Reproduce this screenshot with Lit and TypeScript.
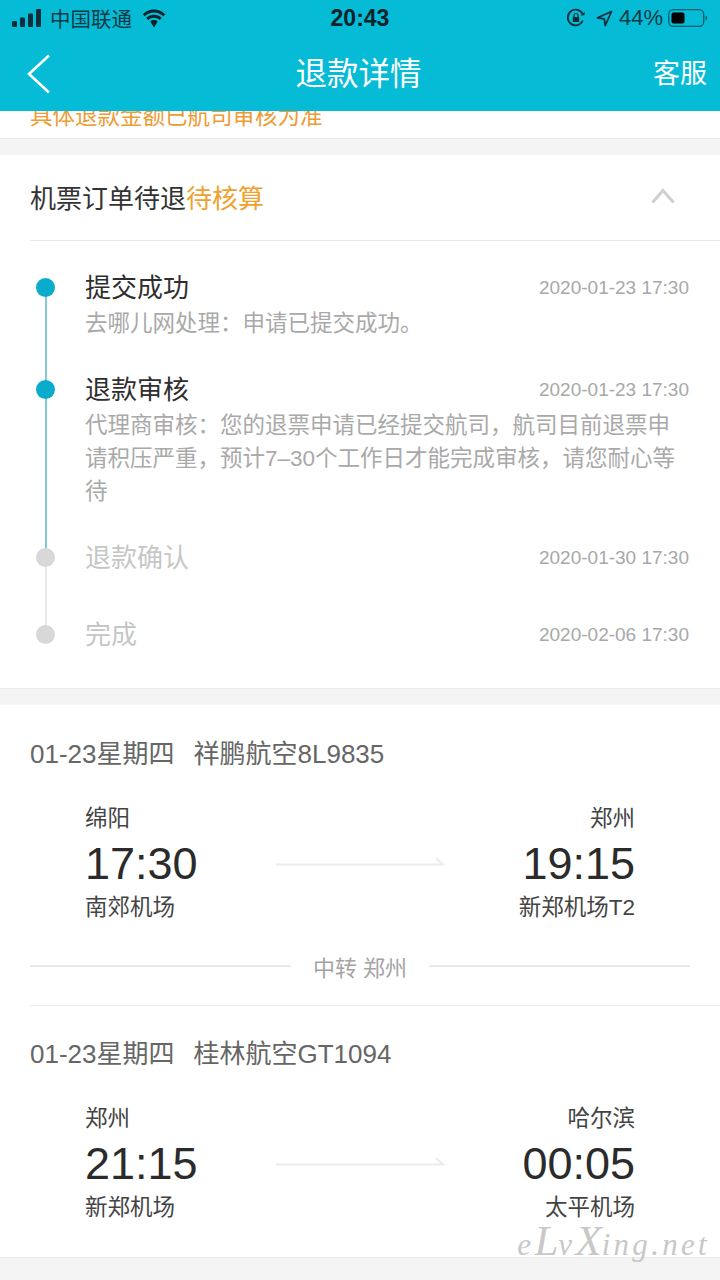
import { LitElement, html, css, svg } from "lit";
import { customElement } from "lit/decorators.js";

const STEPS = [
  { title: "提交成功", time: "2020-01-23 17:30", desc: ["去哪儿网处理\uFF1A申请已提交成功。"], on: true, next: true },
  {
    title: "退款审核",
    time: "2020-01-23 17:30",
    desc: [
      "代理商审核\uFF1A您的退票申请已经提交航司\uFF0C航司目前退票申",
      "请积压严重\uFF0C预计7–30个工作日才能完成审核\uFF0C请您耐心等",
      "待",
    ],
    on: true,
    next: true,
  },
  { title: "退款确认", time: "2020-01-30 17:30", desc: [], on: false, next: false },
  { title: "完成", time: "2020-02-06 17:30", desc: [], on: false, next: false },
];

const arrow = svg`<svg class="arrow" width="170" height="10" viewBox="0 0 170 10">
  <path d="M1 8.500H168L161 2" fill="none" stroke="#ececec" stroke-width="2"/>
</svg>`;

@customElement("app-root")
export class AppRoot extends LitElement {
  static styles = css`
    :host {
      display: block;
      position: relative;
      width: 720px;
      height: 1280px;
      overflow: hidden;
      background: #f4f4f4;
      font-family: "Liberation Sans", "Noto Sans CJK SC", sans-serif;
      color: #333;
    }
    .top {
      background: #05bbd5;
      height: 111px;
    }
    .status {
      height: 36px;
      display: grid;
      grid-template-columns: 1fr auto 1fr;
      align-items: center;
      color: #0b3a47;
      font-size: 20.5px;
      padding: 0 12px;
    }
    .status .left,
    .status .right {
      display: flex;
      align-items: center;
    }
    .status .right {
      justify-content: flex-end;
    }
    .carrier {
      margin: 0 9px;
    }
    .clock {
      font-weight: 700;
      font-size: 23px;
      color: #08222a;
    }
    .pct {
      margin: 0 5px 0 6px;
      font-size: 22px;
    }
    .nav {
      height: 75px;
      display: grid;
      grid-template-columns: 1fr auto 1fr;
      align-items: center;
      color: #fff;
      padding: 0 13px;
    }
    .nav svg {
      margin-left: 13px;
    }
    .nav .title {
      font-size: 31.5px;
      margin: -5px 0 0 -3px;
    }
    .nav .service {
      justify-self: end;
      font-size: 27px;
      margin-top: -4px;
    }
    .notice {
      height: 21px;
      background: #fff;
      border-bottom: 1px solid #ececec;
      overflow: hidden;
      display: flex;
      align-items: flex-end;
      padding: 0 30px 6px;
      color: #ee9a33;
      font-size: 22.5px;
      line-height: 30px;
    }
    .card {
      background: #fff;
      margin-top: 16px;
      border-bottom: 1px solid #ececec;
    }
    .head {
      height: 86px;
      margin-left: 30px;
      border-bottom: 1px solid #e8e8e8;
      display: flex;
      align-items: center;
      justify-content: space-between;
      font-size: 26px;
      color: #333;
      box-sizing: border-box;
      padding-bottom: 3px;
    }
    .head em {
      font-style: normal;
      color: #eea22e;
    }
    .head svg {
      margin-right: 45px;
    }
    .steps {
      padding: 28px 31px 36px 85px;
    }
    .step {
      position: relative;
      padding-bottom: 31px;
    }
    .step:nth-child(3) {
      padding-bottom: 41px;
    }
    .step:last-child {
      padding-bottom: 0;
    }
    .dot {
      position: absolute;
      left: -49px;
      top: 9px;
      width: 19px;
      height: 19px;
      border-radius: 50%;
      background: #d8d8d8;
      z-index: 1;
    }
    .on .dot {
      background: #0aaccb;
    }
    .line {
      position: absolute;
      left: -40px;
      top: 18px;
      bottom: -18px;
      width: 2px;
      background: #e8e8e8;
    }
    .next .line {
      background: #80cbda;
    }
    .step:last-child .line {
      display: none;
    }
    .row {
      display: flex;
      justify-content: space-between;
      align-items: center;
      height: 36px;
      font-size: 26px;
      color: #c6c6c6;
    }
    .row span {
      margin-top: -4px;
    }
    .on .row {
      color: #2e2e2e;
    }
    .row time {
      font-size: 19px;
      color: #a8a8a8;
      margin-top: 2px;
    }
    .desc {
      font-size: 22.5px;
      line-height: 33px;
      color: #a9a9a9;
      margin-top: 2px;
      white-space: nowrap;
    }
    .flights {
      background: #fff;
      margin-top: 16px;
      height: 552px;
      border-bottom: 1px solid #ececec;
    }
    .date {
      margin-left: 30px;
      height: 34px;
      padding-top: 29px;
      display: flex;
      align-items: center;
      gap: 19px;
      font-size: 26px;
      color: #666;
    }
    .leg {
      display: grid;
      grid-template-columns: 1fr 170px 1fr;
      align-items: center;
      padding: 35px 85px 0;
    }
    .end {
      display: flex;
      flex-direction: column;
      font-size: 22.5px;
      color: #444;
      line-height: 32px;
    }
    .end.right {
      align-items: flex-end;
    }
    .end b {
      font-weight: 400;
      font-size: 45px;
      line-height: 57px;
      color: #2b2b2b;
    }
    .arrow {
      display: block;
      margin-top: -6px;
    }
    .transfer {
      display: flex;
      align-items: center;
      gap: 22px;
      margin: 27px 30px 0;
      height: 30px;
      color: #a4a4a4;
      font-size: 22px;
    }
    .transfer::before,
    .transfer::after {
      content: "";
      flex: 1;
      height: 1.5px;
      background: #e8e8e8;
    }
    .rule {
      margin: 24px 0 0 30px;
      height: 1px;
      background: #eeeeee;
    }
    .rule + .date {
      padding-top: 28px;
    }
    .mark {
      position: absolute;
      right: 10px;
      top: 1220px;
      font-family: "Liberation Serif", serif;
      font-style: italic;
      font-size: 31px;
      line-height: 42px;
      letter-spacing: 3.3px;
      color: #c8c8c8;
      white-space: nowrap;
    }
    .mark span {
      font-size: 43px;
      letter-spacing: 0;
    }
  `;

  private statusBar() {
    return html`<div class="status">
      <div class="left">
        <svg width="29" height="18" viewBox="0 0 29 18" fill="#0b2f3a">
          <rect x="0" y="12" width="5" height="6" rx="1"/>
          <rect x="8" y="8.500" width="5" height="9.500" rx="1"/>
          <rect x="16" y="4.500" width="5" height="13.500" rx="1"/>
          <rect x="24" y="0" width="5" height="18" rx="1"/>
        </svg>
        <span class="carrier">中国联通</span>
        <svg width="26" height="19" viewBox="0 0 26 19" fill="#08222a">
          <path d="M13 3.600c3.600 0 6.900 1.400 9.400 3.700l1.900-2.100C21.300 2.400 17.300.6 13 .6S4.700 2.400 1.700 5.200l1.900 2.100C6.100 5 9.400 3.600 13 3.600z"/>
          <path d="M13 8.800c2.200 0 4.200.8 5.800 2.200l2-2.200C18.600 6.900 15.900 5.800 13 5.800s-5.600 1.100-7.800 3l2 2.200c1.600-1.400 3.600-2.200 5.800-2.200z"/>
          <path d="M13 11c-1.500 0-2.700.5-3.700 1.400L13 18.600l3.700-6.200c-1-.9-2.200-1.400-3.700-1.400z"/>
        </svg>
      </div>
      <div class="clock">20:43</div>
      <div class="right">
        <svg width="20" height="20" viewBox="0 0 20 20" fill="none" stroke="#0b2f3a" stroke-width="1.800">
          <path d="M16.800 12.500A7.800 7.800 0 1 1 16.800 6.500"/>
          <path d="M14.500 7.500l4-.2.400-3.600z" fill="#0b2f3a" stroke="none"/>
          <rect x="6.800" y="9" width="6.400" height="5" fill="#0b2f3a" stroke="none"/>
          <path d="M8 9V7.500a2 2 0 0 1 4 0V9" stroke-width="1.200"/>
        </svg>
        <svg style="margin-left:10px" width="17" height="17" viewBox="0 0 17 17" fill="none" stroke="#0b2f3a" stroke-width="1.800" stroke-linejoin="round">
          <path d="M15.500 1.500L1.500 7.800l6.800 1 1 6.700z"/>
        </svg>
        <span class="pct">44%</span>
        <svg width="40" height="18" viewBox="0 0 40 18">
          <rect x=".7" y=".7" width="35" height="16.600" rx="4.500" fill="none" stroke="#0b5c6e" stroke-width="1.300"/>
          <rect x="3.500" y="3.500" width="13" height="11" rx="2" fill="#000"/>
          <path d="M37.500 6.500c1.300.4 1.800 1.300 1.800 2.500s-.5 2.100-1.800 2.500z" fill="#0b5c6e"/>
        </svg>
      </div>
    </div>`;
  }

  private flight(date: string, flightNo: string, from: string[], to: string[]) {
    return html`<div class="date"><span>${date}</span><span>${flightNo}</span></div>
      <div class="leg">
        <div class="end"><span>${from[0]}</span><b>${from[1]}</b><span>${from[2]}</span></div>
        ${arrow}
        <div class="end right"><span>${to[0]}</span><b>${to[1]}</b><span>${to[2]}</span></div>
      </div>`;
  }

  render() {
    return html`
      <div class="top">
        ${this.statusBar()}
        <div class="nav">
          <svg width="26" height="40" viewBox="0 0 26 40" fill="none" stroke="#fff" stroke-width="2.600">
            <path d="M23 1.500L3 20l20 18.500"/>
          </svg>
          <div class="title">退款详情</div>
          <div class="service">客服</div>
        </div>
      </div>
      <div class="notice"><span>具体退款金额已航司审核为准</span></div>

      <section class="card">
        <div class="head">
          <span>机票订单待退<em>待核算</em></span>
          <svg width="24" height="16" viewBox="0 0 24 16" fill="none" stroke="#cfcfcf" stroke-width="3">
            <path d="M1.500 14.500L12 2.500l10.500 12"/>
          </svg>
        </div>
        <div class="steps">
          ${STEPS.map(
            (s) => html`<div class="step ${s.on ? "on" : ""} ${s.next ? "next" : ""}">
              <i class="dot"></i><i class="line"></i>
              <div class="row"><span>${s.title}</span><time>${s.time}</time></div>
              ${s.desc.length ? html`<div class="desc">${s.desc.map((d) => html`<div>${d}</div>`)}</div>` : ""}
            </div>`
          )}
        </div>
      </section>

      <section class="flights">
        ${this.flight("01-23星期四", "祥鹏航空8L9835", ["绵阳", "17:30", "南郊机场"], ["郑州", "19:15", "新郑机场T2"])}
        <div class="transfer">中转 郑州</div>
        <div class="rule"></div>
        ${this.flight("01-23星期四", "桂林航空GT1094", ["郑州", "21:15", "新郑机场"], ["哈尔滨", "00:05", "太平机场"])}
      </section>
      <div class="mark">e<span>L</span>v<span>X</span>ing.net</div>
    `;
  }
}
